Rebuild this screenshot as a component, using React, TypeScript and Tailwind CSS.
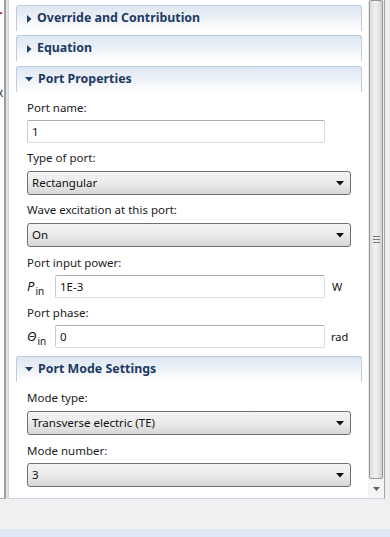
import React from "react";

const font = { fontFamily: '"Noto Sans", "Segoe UI", Arial, sans-serif' };

function TriRight() {
  return (
    <svg width="5" height="8" viewBox="0 0 5 8" className="shrink-0">
      <path d="M0 0 L4.5 4 L0 8 Z" fill="#1f416b" />
    </svg>
  );
}
function TriDown() {
  return (
    <svg width="8" height="5" viewBox="0 0 8 5" className="shrink-0">
      <path d="M0 0 L8 0 L4 4.5 Z" fill="#1f416b" />
    </svg>
  );
}

function Header({ title, open }: { title: string; open?: boolean }) {
  return (
    <div className="h-[26px] flex items-center rounded-t-[3px] border-t border-l border-r border-[#bccde1] bg-gradient-to-b from-[#dde6f1] to-[#ffffff]">
      <div className={open ? "w-[21px] flex justify-end pr-[5px]" : "w-[20px] flex justify-end pr-[5px]"}>
        {open ? <TriDown /> : <TriRight />}
      </div>
      <span className="text-[12.4px] font-bold text-[#1d3a63] leading-none pb-[1px]">{title}</span>
    </div>
  );
}

function Label({ children, mt }: { children: React.ReactNode; mt: string }) {
  return (
    <div className={`${mt} h-[16px] flex items-center text-[11.5px] text-[#1a1a1a] leading-none`}>{children}</div>
  );
}

function Select({ value, mt }: { value: string; mt: string }) {
  return (
    <div
      className={`${mt} h-[24px] w-[324px] rounded-[3px] border border-[#707070] bg-gradient-to-b from-[#f3f3f3] via-[#ebebeb] to-[#d6d6d6] flex items-center justify-between pl-[4px] pr-[6px]`}
    >
      <span className="text-[11.5px] text-[#111] leading-none">{value}</span>
      <svg width="8" height="5" viewBox="0 0 8 5">
        <path d="M0 0 L8 0 L4 4.5 Z" fill="#111" />
      </svg>
    </div>
  );
}

function Input({ value, w }: { value: string; w: string }) {
  return (
    <div
      className={`${w} h-[23px] rounded-[2px] border border-[#d6dde6] border-t-[#abadb3] border-l-[#c6ccd4] bg-white flex items-center pl-[4px]`}
    >
      <span className="text-[11.5px] text-[#111] leading-none">{value}</span>
    </div>
  );
}

export default function App() {
  return (
    <div className="w-[390px] h-[537px] bg-[#f0f0f0] flex flex-col overflow-hidden" style={font}>
      <div className="h-[499px] flex shrink-0">
        {/* left clipped strip */}
        <div className="w-[4px] bg-white border-b border-[#a9a9a9] overflow-hidden flex flex-col">
          <div className="mt-[9px] h-[10px] text-[12px] leading-none font-bold text-[#b01818] -ml-[3px]">r</div>
          <div className="mt-[68px] text-[12px] leading-none text-[#333] -ml-[3px]">x</div>
        </div>
        <div className="w-[2px] bg-[#a0a0a0]" />
        <div className="w-[2px] bg-[#e3e3e3]" />
        {/* panel */}
        <div className="flex-1 flex bg-white border-l border-b border-r border-l-[#c8d6e6] border-b-[#c8d6e6] border-r-[#9fa5ab]">
          <div className="flex-1 pl-[7px] pr-[6px] pt-[5px] flex flex-col">
            <Header title="Override and Contribution" />
            <div className="mt-[4px]">
              <Header title="Equation" />
            </div>
            <div className="mt-[5px]">
              <Header title="Port Properties" open />
            </div>
            <div className="pl-[11px] flex flex-col">
              <Label mt="mt-[8px]">Port name:</Label>
              <div className="mt-[4px]">
                <Input value="1" w="w-[298px]" />
              </div>
              <Label mt="mt-[7px]">Type of port:</Label>
              <Select mt="mt-[5px]" value="Rectangular" />
              <Label mt="mt-[7px]">Wave excitation at this port:</Label>
              <Select mt="mt-[5px]" value="On" />
              <Label mt="mt-[8px]">Port input power:</Label>
              <div className="mt-[4px] flex items-center">
                <div className="w-[28px] flex items-end text-[#111]">
                  <span className="italic text-[13px] leading-none">P</span>
                  <span className="text-[10px] leading-none ml-[1px] translate-y-[3px]">in</span>
                </div>
                <Input value="1E-3" w="w-[270px]" />
                <span className="ml-[7px] text-[11px] text-[#111] leading-none">W</span>
              </div>
              <Label mt="mt-[7px]">Port phase:</Label>
              <div className="mt-[4px] flex items-center">
                <div className="w-[28px] flex items-end text-[#111]">
                  <span className="italic text-[13px] leading-none">Θ</span>
                  <span className="text-[10px] leading-none ml-[1px] translate-y-[3px]">in</span>
                </div>
                <Input value="0" w="w-[270px]" />
                <span className="ml-[6px] text-[11px] text-[#111] leading-none">rad</span>
              </div>
            </div>
            <div className="mt-[8px]">
              <Header title="Port Mode Settings" open />
            </div>
            <div className="pl-[11px] flex flex-col">
              <Label mt="mt-[8px]">Mode type:</Label>
              <Select mt="mt-[5px]" value="Transverse electric (TE)" />
              <Label mt="mt-[8px]">Mode number:</Label>
              <Select mt="mt-[4px]" value="3" />
            </div>
          </div>
          {/* scrollbar */}
          <div className="w-[16px] flex flex-col bg-[#eaeaea]">
            <div className="flex-1 mx-[1px] rounded-[2px] border border-[#979797] bg-gradient-to-r from-[#dedede] via-[#f2f2f2] to-[#d2d2d2] flex items-center justify-center">
              <div className="flex flex-col gap-[2px]">
                <div className="w-[7px] h-[1px] bg-[#7a7a7a]" />
                <div className="w-[7px] h-[1px] bg-[#7a7a7a]" />
                <div className="w-[7px] h-[1px] bg-[#7a7a7a]" />
              </div>
            </div>
            <div className="h-[19px] flex items-center justify-center bg-[#f4f4f4]">
              <svg width="7" height="4" viewBox="0 0 7 4">
                <path d="M0 0 L7 0 L3.5 4 Z" fill="#606060" />
              </svg>
            </div>
          </div>
        </div>
        <div className="w-[5px]" />
      </div>
      <div className="flex-1" />
      <div className="h-[8px] bg-[#dde8f4] shrink-0" />
    </div>
  );
}
